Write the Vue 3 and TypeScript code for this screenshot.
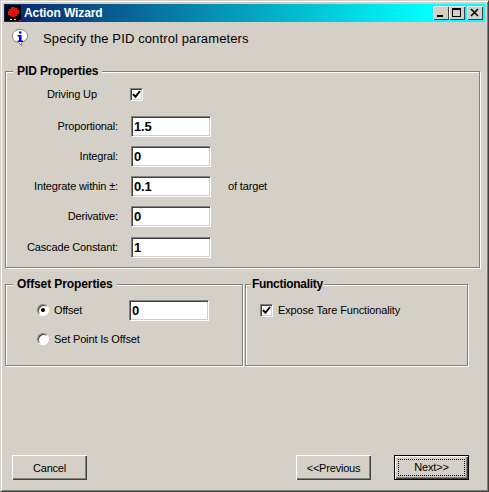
<script setup lang="ts">
interface Field { label: string; value: string; suffix?: string }
const fields: Field[] = [
  { label: 'Proportional:', value: '1.5' },
  { label: 'Integral:', value: '0' },
  { label: 'Integrate within ±:', value: '0.1', suffix: 'of target' },
  { label: 'Derivative:', value: '0' },
  { label: 'Cascade Constant:', value: '1' },
]
</script>

<template>
  <div class="window">
    <div class="titlebar">
      <svg class="appicon" width="16" height="16" viewBox="0 0 16 16" shape-rendering="crispEdges">
        <rect width="16" height="16" fill="#000" />
        <path d="M6 2h4v1h2v2h2v4h-2v2h-2v1H7v-1H5v-1H3V6h1V4h2z" fill="#e01010" />
        <rect x="5" y="14" width="2" height="1" fill="#fff" />
        <rect x="9" y="14" width="2" height="1" fill="#ccc" />
        <rect x="14" y="15" width="2" height="1" fill="#c0c" />
      </svg>
      <span class="title">Action Wizard</span>
      <div class="caps">
        <span class="cap"><svg width="12" height="10" shape-rendering="crispEdges"><rect x="2" y="7" width="6" height="2" fill="#000" /></svg></span>
        <span class="cap"><svg width="12" height="10" shape-rendering="crispEdges"><path d="M1 0h9v9H1zM2 2v6h7V2z" fill="#000" fill-rule="evenodd" /></svg></span>
        <span class="cap close"><svg width="12" height="10"><path d="M2 1l7 7M9 1l-7 7" stroke="#000" stroke-width="1.6" fill="none" /></svg></span>
      </div>
    </div>

    <div class="body">
      <div class="header">
        <svg class="info" width="17" height="18" viewBox="0 0 17 18">
          <path d="M8 .5C3.5.5.5 3.2.5 7.2c0 3.6 2.6 6 6 6.2l3.2 3.4v-3.6c3.300-.8 5.800-3 5.800-6C15.500 3.200 12.500.500 8 .500z" fill="#fff" stroke="#808080" />
          <rect x="7" y="2.500" width="2.500" height="2" fill="#00f" />
          <path d="M5.500 6h4v5.500h1.500V13H5.500v-1.500H7V7.500H5.500z" fill="#00f" />
        </svg>
        <span class="heading">Specify the PID control parameters</span>
      </div>

      <section class="group pid">
        <h3 class="legend">PID Properties</h3>
        <div class="driving">
          <span class="driving-label">Driving Up</span>
          <span class="check"><svg width="9" height="9" viewBox="0 0 9 9"><path d="M1 4l2.500 2.800L8 1" stroke="#000" stroke-width="2" fill="none" /></svg></span>
        </div>
        <div class="fields">
          <div v-for="f in fields" :key="f.label" class="field">
            <label class="field-label">{{ f.label }}</label>
            <span class="input">{{ f.value }}</span>
            <span v-if="f.suffix" class="suffix">{{ f.suffix }}</span>
          </div>
        </div>
      </section>

      <div class="lower">
        <section class="group offset">
          <h3 class="legend">Offset Properties</h3>
          <div class="radio-row first">
            <span class="radio on"></span>
            <span class="radio-label short">Offset</span>
            <span class="input">0</span>
          </div>
          <div class="radio-row">
            <span class="radio"></span>
            <span class="radio-label">Set Point Is Offset</span>
          </div>
        </section>
        <section class="group func">
          <h3 class="legend tight">Functionality</h3>
          <div class="expose">
            <span class="check"><svg width="9" height="9" viewBox="0 0 9 9"><path d="M1 4l2.500 2.800L8 1" stroke="#000" stroke-width="2" fill="none" /></svg></span>
            <span class="radio-label">Expose Tare Functionality</span>
          </div>
        </section>
      </div>

      <div class="buttons">
        <button class="btn">Cancel</button>
        <div class="nav">
          <button class="btn">&lt;&lt;Previous</button>
          <button class="btn default"><span class="focus">Next&gt;&gt;</span></button>
        </div>
      </div>
    </div>
  </div>
</template>

<style>
html, body { margin: 0; padding: 0; background: #d4d0c8; }
</style>

<style scoped>
.window {
  width: 489px;
  height: 492px;
  box-sizing: border-box;
  background: #d4d0c8;
  border: 1px solid;
  border-color: #d4d0c8 #404040 #404040 #d4d0c8;
  box-shadow: inset 1px 1px 0 #fff, inset -1px -1px 0 #808080;
  padding: 3px;
  display: flex;
  flex-direction: column;
  font-family: "Liberation Sans", Arial, sans-serif;
  font-size: 11px;
  letter-spacing: -0.15px;
  color: #000;
  overflow: hidden;
}
.titlebar {
  height: 18px;
  flex: none;
  display: flex;
  align-items: center;
  padding: 0 2px 0 1px;
  background: linear-gradient(90deg, #0a246a 0%, #00ffff 88%);
}
.appicon { flex: none; }
.title {
  margin-left: 3px;
  color: #fff;
  font-size: 12px;
  font-weight: bold;
  letter-spacing: -0.1px;
}
.caps { margin-left: auto; display: flex; }
.cap {
  width: 16px;
  height: 14px;
  box-sizing: border-box;
  background: #d4d0c8;
  display: flex;
  align-items: center;
  justify-content: center;
  box-shadow: inset 1px 1px 0 #fff, inset -1px -1px 0 #404040;
}
.cap.close { margin-left: 2px; }
.body {
  flex: 1;
  display: flex;
  flex-direction: column;
}
.header {
  display: flex;
  align-items: center;
  height: 22px;
  margin-top: 5px;
  padding-left: 8px;
}
.info { flex: none; }
.heading { margin-left: 14px; font-size: 13px; letter-spacing: 0.12px; }
.group {
  border: 1px solid #808080;
  box-shadow: 1px 1px 0 #fff, inset 1px 1px 0 #fff;
  box-sizing: border-box;
}
.legend {
  display: inline-block;
  margin: -8px 0 0 7px;
  padding: 0 4px;
  font-size: 12px;
  font-weight: bold;
  line-height: 14px;
  background: #d4d0c8;
  vertical-align: top;
  letter-spacing: -0.1px;
}
.legend.tight { margin-left: 5px; padding: 0 1px; letter-spacing: -0.3px; }
.pid {
  margin: 22px 5px 0 1px;
  height: 197px;
}
.driving {
  display: flex;
  align-items: center;
  margin-top: 3px;
  height: 14px;
  padding-left: 41px;
}
.driving-label { width: 83px; }
.check {
  width: 13px;
  height: 13px;
  flex: none;
  box-sizing: border-box;
  background: #fff;
  border: 1px solid;
  border-color: #808080 #fff #fff #808080;
  box-shadow: inset 1px 1px 0 #404040, inset -1px -1px 0 #d4d0c8;
  display: flex;
  align-items: center;
  justify-content: center;
}
.fields {
  display: flex;
  flex-direction: column;
  gap: 10px;
  margin-top: 15px;
}
.field { display: flex; align-items: center; height: 20px; }
.field:last-child { margin-top: 1px; }
.field-label { width: 112px; text-align: right; }
.input {
  width: 80px;
  height: 21px;
  box-sizing: border-box;
  margin-left: 13px;
  padding-left: 2px;
  background: #fff;
  border: 1px solid;
  border-color: #808080 #fff #fff #808080;
  box-shadow: inset 1px 1px 0 #404040, inset -1px -1px 0 #d4d0c8;
  font-size: 13px;
  font-weight: bold;
  line-height: 19px;
  letter-spacing: -0.2px;
}
.suffix { margin-left: 17px; }
.lower {
  display: flex;
  margin-top: 16px;
  gap: 2px;
  height: 82px;
}
.offset { width: 238px; margin-left: 1px; }
.func { width: 223px; }
.radio-row { display: flex; align-items: center; height: 20px; padding-left: 31px; }
.radio-row.first { margin-top: 3px; }
.radio-row:not(.first) { margin-top: 9px; }
.radio {
  width: 12px;
  height: 12px;
  box-sizing: border-box;
  flex: none;
  border-radius: 50%;
  background: #fff;
  border: 1px solid;
  border-color: #808080 #fff #fff #808080;
  box-shadow: inset 1px 1px 0 #404040;
  display: flex;
  align-items: center;
  justify-content: center;
}
.radio.on::after {
  content: "";
  width: 4px;
  height: 4px;
  border-radius: 50%;
  background: #000;
}
.radio-label { margin-left: 5px; }
.radio-label.short { width: 62px; }
.expose {
  display: flex;
  align-items: center;
  margin: 6px 0 0 14px;
  height: 14px;
}
.buttons {
  margin-top: auto;
  padding: 0 16px 8px 8px;
  display: flex;
  justify-content: space-between;
}
.nav { display: flex; gap: 23px; }
.btn {
  width: 75px;
  height: 25px;
  padding: 0;
  background: #d4d0c8;
  border: none;
  box-shadow: inset 1px 1px 0 #fff, inset -1px -1px 0 #404040, inset -2px -2px 0 #808080;
  font-family: inherit;
  font-size: 11px;
  letter-spacing: -0.2px;
  color: #000;
  display: flex;
  align-items: center;
  justify-content: center;
}
.btn.default {
  border: 1px solid #000;
  box-sizing: border-box;
}
.focus {
  width: 65px;
  height: 15px;
  border: 1px dotted #000;
  line-height: 15px;
  text-align: center;
}
</style>
